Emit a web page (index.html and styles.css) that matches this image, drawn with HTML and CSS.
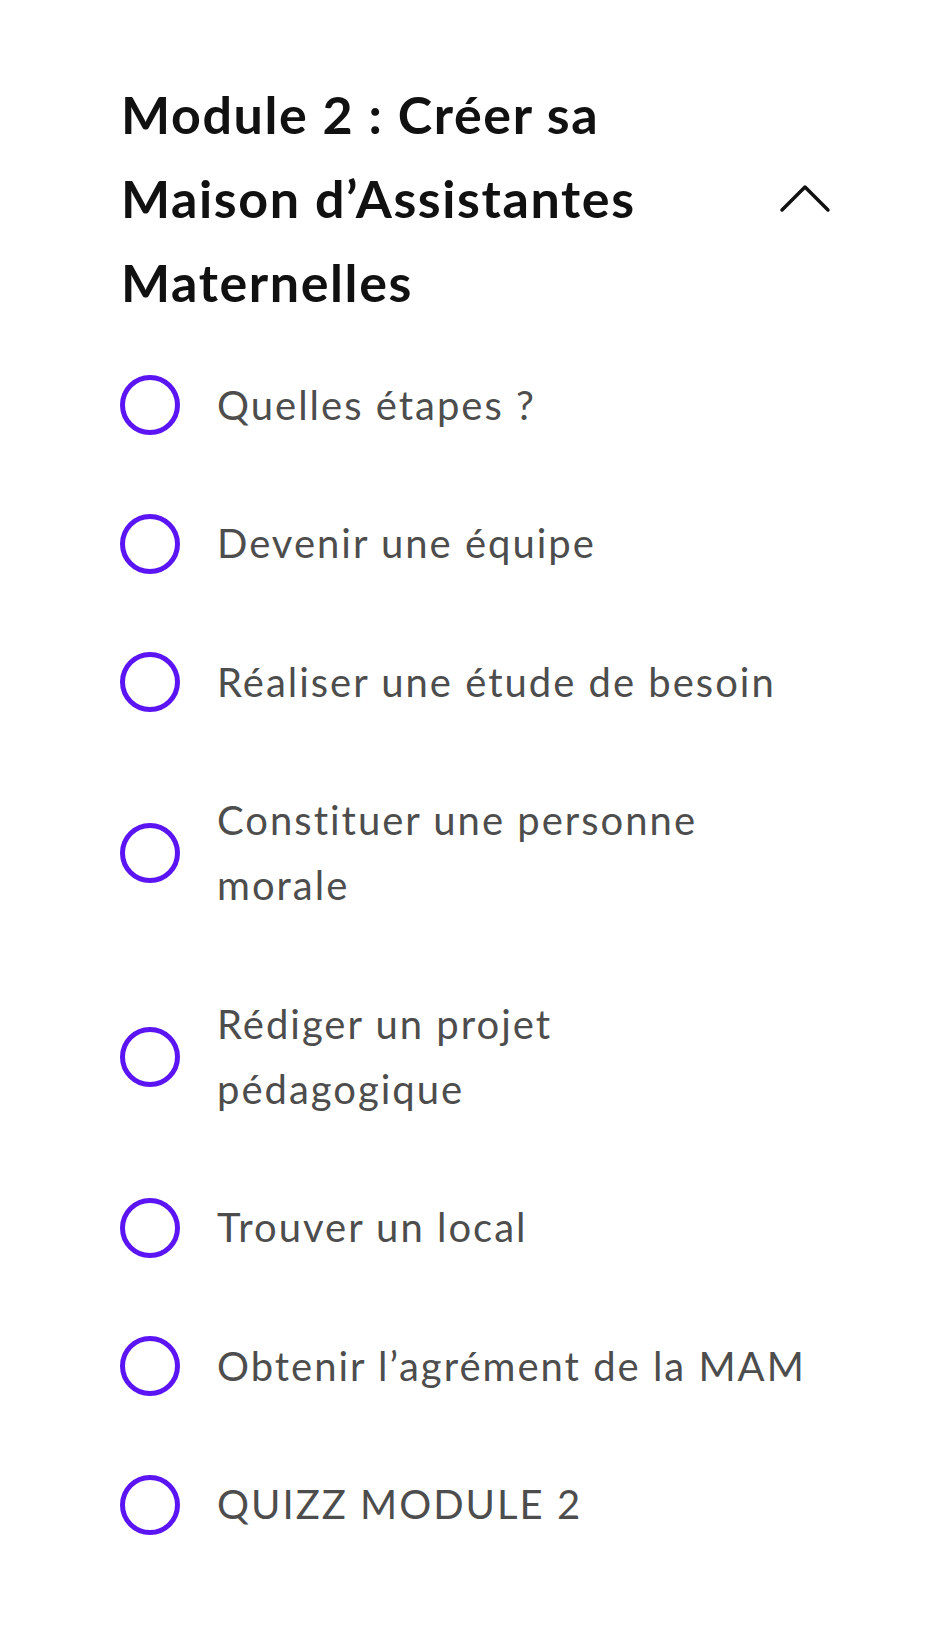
FILE: index.html
```html
<!DOCTYPE html>
<html lang="fr">
<head>
    <meta charset="UTF-8">
    <meta name="viewport" content="width=device-width, initial-scale=1.0">
    <title>Module 2</title>
    <link rel="stylesheet" href="styles.css">
</head>
<body>
    <div class="module">
        <div class="module-header">
            <h2>Module 2 : Créer sa Maison d’Assistantes Maternelles</h2>
            <svg class="chevron" width="52" height="30" viewBox="0 0 52 30">
                <polyline points="3,27 26,4 49,27" fill="none" stroke="#111" stroke-width="3.5" stroke-linecap="round" stroke-linejoin="round"/>
            </svg>
        </div>

        <ul class="lessons">
            <li><span class="dot"></span><span class="title">Quelles étapes ?</span></li>
            <li><span class="dot"></span><span class="title">Devenir une équipe</span></li>
            <li><span class="dot"></span><span class="title">Réaliser une étude de besoin</span></li>
            <li><span class="dot"></span><span class="title">Constituer une personne morale</span></li>
            <li><span class="dot"></span><span class="title">Rédiger un projet pédagogique</span></li>
            <li><span class="dot"></span><span class="title">Trouver un local</span></li>
            <li><span class="dot"></span><span class="title">Obtenir l’agrément de la MAM</span></li>
            <li><span class="dot"></span><span class="title">QUIZZ MODULE 2</span></li>
        </ul>
    </div>
</body>
</html>
```

FILE: styles.css
```css
body {
    font-family: "Source Sans Pro", Lato, sans-serif;
    margin: 0;
    padding: 0;
    background-color: #ffffff;
}
.module {
    width: 708px;
    margin: 0 auto;
    padding-top: 72px;
    padding-left: 1px;
}
.module-header {
    display: flex;
    align-items: center;
    justify-content: space-between;
}
.module-header h2 {
    margin: 0;
    width: 600px;
    font-size: 52px;
    line-height: 84px;
    font-weight: 700;
    letter-spacing: 1.6px;
    color: #111111;
}
.chevron {
    flex-shrink: 0;
    margin-right: -2px;
}
.lessons {
    list-style: none;
    margin: 12px 0 0;
    padding: 0;
}
.lessons li {
    display: flex;
    align-items: center;
    padding: 36.5px 0 37px;
}
.dot {
    flex-shrink: 0;
    width: 50px;
    height: 50px;
    border: 5px solid #5b14f4;
    border-radius: 50%;
    margin-left: -1px;
    margin-right: 37px;
}
.title {
    max-width: 590px;
    font-size: 40px;
    line-height: 65px;
    letter-spacing: 2px;
    color: #4d4d4d;
}
```
